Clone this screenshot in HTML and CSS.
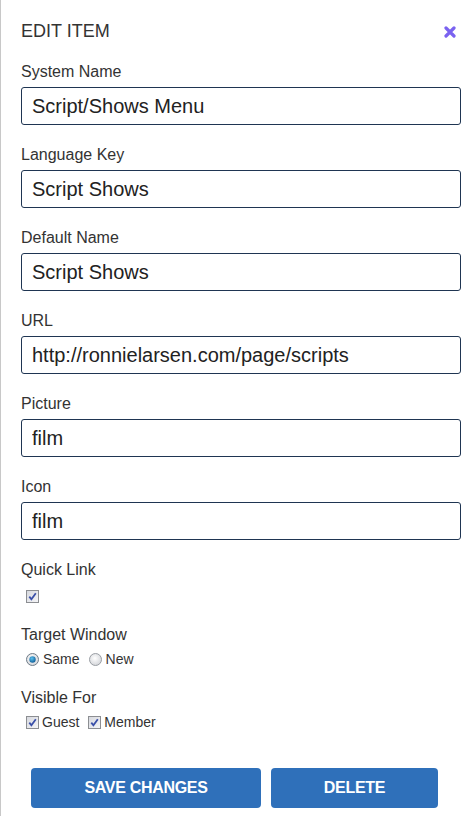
FILE: index.html
```html
<!DOCTYPE html>
<html>
<head>
<meta charset="utf-8">
<link rel="stylesheet" href="styles.css">
</head>
<body>
<div class="panel">
  <div class="header">
    <div class="title">EDIT ITEM</div>
    <svg class="close" width="12" height="12" viewBox="0 0 12 12"><path d="M2 2 L10 10 M10 2 L2 10" stroke="#7a62f0" stroke-width="3.2" stroke-linecap="round"/></svg>
  </div>

  <div class="field">
    <div class="label">System Name</div>
    <input class="text" type="text" value="Script/Shows Menu">
  </div>
  <div class="field">
    <div class="label">Language Key</div>
    <input class="text" type="text" value="Script Shows">
  </div>
  <div class="field">
    <div class="label">Default Name</div>
    <input class="text" type="text" value="Script Shows">
  </div>
  <div class="field">
    <div class="label">URL</div>
    <input class="text" type="text" value="http://ronnielarsen.com/page/scripts">
  </div>
  <div class="field">
    <div class="label">Picture</div>
    <input class="text" type="text" value="film">
  </div>
  <div class="field">
    <div class="label">Icon</div>
    <input class="text" type="text" value="film">
  </div>

  <div class="field">
    <div class="label">Quick Link</div>
    <div class="options options-quick">
      <span class="opt">
        <svg class="box" width="13" height="13" viewBox="0 0 13 13"><defs><linearGradient id="cg" x1="0" y1="0" x2="1" y2="1"><stop offset="0" stop-color="#d6d8de"/><stop offset="1" stop-color="#f6f6f8"/></linearGradient></defs><rect x="0.5" y="0.5" width="12" height="12" fill="url(#cg)" stroke="#8c8e92"/><path d="M3.3 6.6 L5.4 9.2 L9.8 3.2" fill="none" stroke="#3a4fa8" stroke-width="1.8"/></svg>
      </span>
    </div>
  </div>

  <div class="field">
    <div class="label">Target Window</div>
    <div class="options options-radio">
      <span class="opt">
        <svg class="box" width="13" height="13" viewBox="0 0 13 13"><defs><radialGradient id="rg" cx="0.45" cy="0.4" r="0.6"><stop offset="0" stop-color="#ffffff"/><stop offset="1" stop-color="#d4d6da"/></radialGradient><radialGradient id="rd" cx="0.4" cy="0.35" r="0.7"><stop offset="0" stop-color="#5ac0ee"/><stop offset="1" stop-color="#0e5b95"/></radialGradient></defs><circle cx="6.5" cy="6.5" r="6" fill="url(#rg)" stroke="#6f7c88"/><circle cx="6.5" cy="6.5" r="3.2" fill="url(#rd)"/></svg>
        <span class="opt-text">Same</span>
      </span>
      <span class="opt">
        <svg class="box" width="13" height="13" viewBox="0 0 13 13"><circle cx="6.5" cy="6.5" r="6" fill="url(#rg)" stroke="#9a9ea4"/></svg>
        <span class="opt-text">New</span>
      </span>
    </div>
  </div>

  <div class="field">
    <div class="label">Visible For</div>
    <div class="options options-visible">
      <span class="opt">
        <svg class="box" width="13" height="13" viewBox="0 0 13 13"><rect x="0.5" y="0.5" width="12" height="12" fill="url(#cg)" stroke="#8c8e92"/><path d="M3.3 6.6 L5.4 9.2 L9.8 3.2" fill="none" stroke="#3a4fa8" stroke-width="1.8"/></svg>
        <span class="opt-text">Guest</span>
      </span>
      <span class="opt">
        <svg class="box" width="13" height="13" viewBox="0 0 13 13"><rect x="0.5" y="0.5" width="12" height="12" fill="url(#cg)" stroke="#8c8e92"/><path d="M3.3 6.6 L5.4 9.2 L9.8 3.2" fill="none" stroke="#3a4fa8" stroke-width="1.8"/></svg>
        <span class="opt-text">Member</span>
      </span>
    </div>
  </div>

  <div class="actions">
    <button class="btn btn-save">SAVE CHANGES</button>
    <button class="btn btn-delete">DELETE</button>
  </div>
</div>
</body>
</html>
```

FILE: styles.css
```css
html, body {
  margin: 0;
  padding: 0;
  background: #ffffff;
}

.panel {
  box-sizing: border-box;
  height: 816px;
  border-left: 1px solid #c8c8c8;
  padding: 21px 10px 0 20px;
  font-family: "Liberation Sans", Arial, sans-serif;
  color: #333333;
}

.header {
  display: flex;
  justify-content: space-between;
  align-items: center;
  height: 20px;
}

.title {
  font-size: 18px;
  line-height: 20px;
  color: #333333;
}

.close {
  display: block;
  margin-right: 5px;
  margin-top: 1px;
}

.field {
  margin-top: 22px;
}

.field + .field {
  margin-top: 21px;
}

.label {
  font-size: 16px;
  line-height: 18px;
  color: #333333;
}

.text {
  display: block;
  box-sizing: border-box;
  width: 440px;
  height: 38px;
  margin: 6px 0 0 0;
  padding: 0 10px;
  border: 1px solid #1f3552;
  border-radius: 3px;
  font-family: "Liberation Sans", Arial, sans-serif;
  font-size: 20px;
  color: #222222;
  background: #ffffff;
  outline: none;
}

.options {
  display: flex;
  align-items: center;
  height: 18px;
  padding-left: 5px;
  font-size: 14px;
}

.options-quick {
  margin-top: 8px;
}

.options-radio {
  margin-top: 6px;
}

.options-visible {
  margin-top: 6px;
}

.opt {
  display: flex;
  align-items: center;
  margin-right: 9px;
}

.box {
  display: block;
  flex: none;
}

.opt-text {
  margin-left: 3px;
  color: #333333;
}

.options-radio .opt-text {
  margin-left: 4px;
}

.actions {
  display: flex;
  gap: 10px;
  padding-left: 10px;
  margin-top: 37px;
}

.btn {
  height: 40px;
  border: none;
  border-radius: 4px;
  background: #2f70ba;
  color: #ffffff;
  font-family: "Liberation Sans", Arial, sans-serif;
  font-weight: bold;
  font-size: 16px;
  letter-spacing: -0.3px;
  padding: 0;
  cursor: pointer;
}

.btn-save {
  width: 230px;
}

.btn-delete {
  width: 167px;
}
```
